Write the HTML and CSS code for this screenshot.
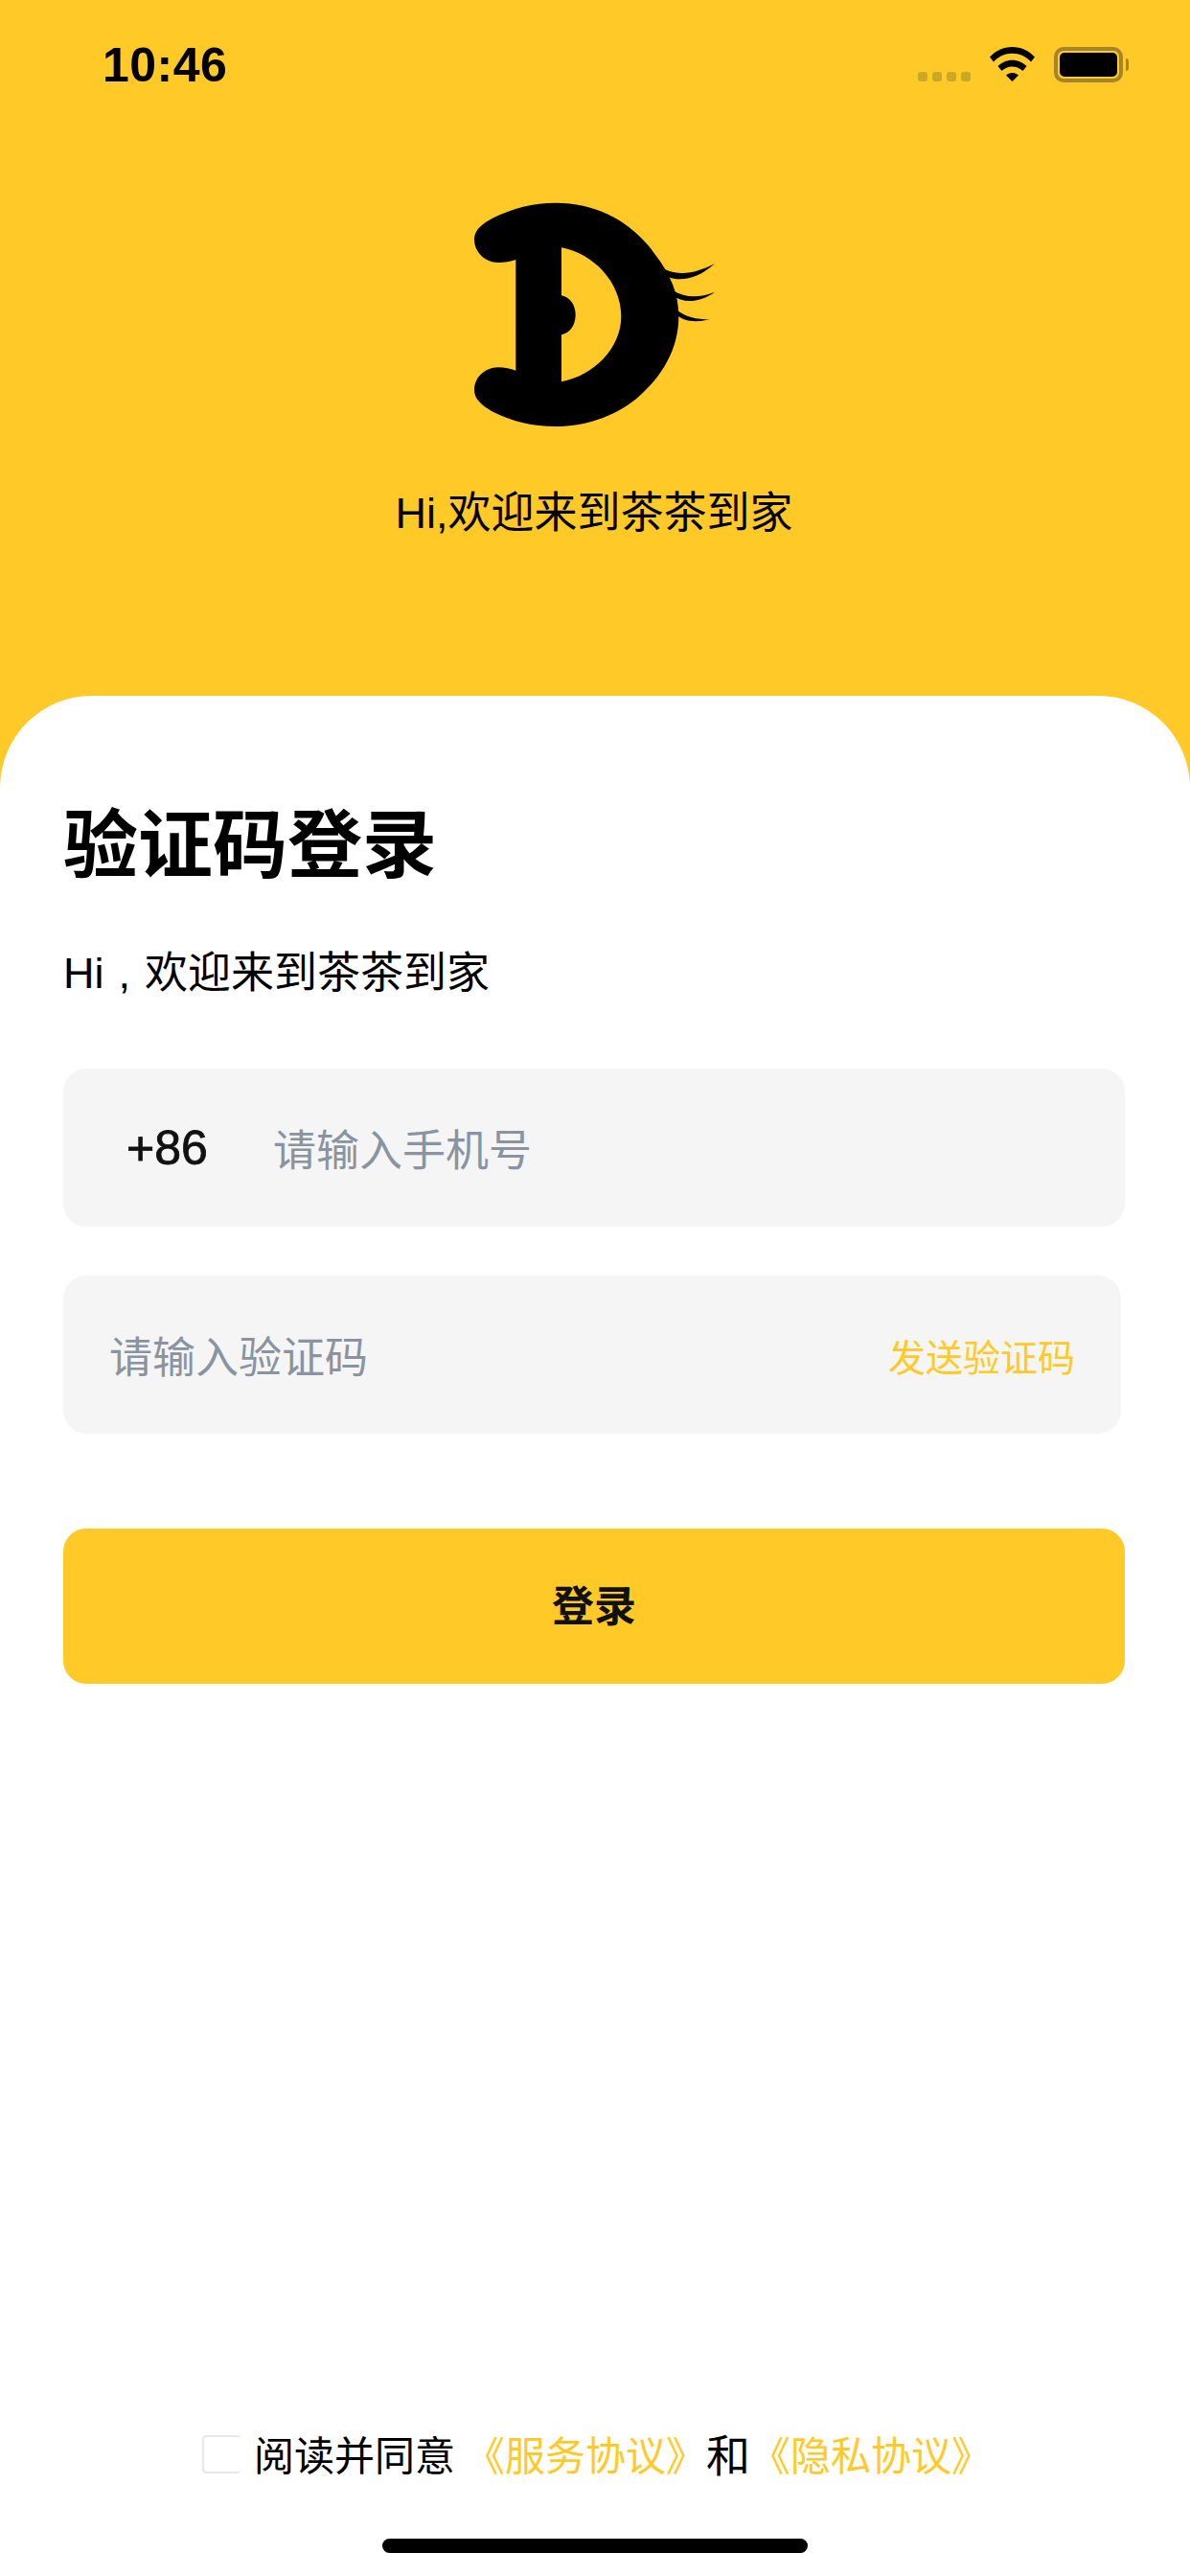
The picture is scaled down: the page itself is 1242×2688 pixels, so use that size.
FILE: index.html
```html
<!DOCTYPE html>
<html lang="zh-CN">
<head>
<meta charset="utf-8">
<title>验证码登录</title>
<link rel="stylesheet" href="styles.css">
</head>
<body>
<div class="page">
  <header class="status">
    <span class="time">10:46</span>
    <div class="status-icons">
      <div class="signal"><i></i><i></i><i></i><i></i></div>
      <svg class="wifi" viewBox="0 0 47 36"><path d="M0 10.5C6.2 4 14.4 0 23.5 0S40.800 4 47 10.500L43 15.500C37.800 10.200 31 6.800 23.500 6.800S9.200 10.200 4 15.500Z"/><path d="M8.500 20C12.300 16.200 17.600 13.700 23.500 13.700S34.700 16.200 38.500 20L34.500 25C31.700 22.200 27.800 20.400 23.500 20.400S15.300 22.200 12.500 25Z"/><path d="M17 29.500C18.700 28 21 27.100 23.500 27.100S28.300 28 30 29.500L23.500 36Z"/></svg>
      <div class="battery"><div class="battery-body"><div class="battery-fill"></div></div><div class="battery-nub"></div></div>
    </div>
  </header>
  <section class="hero">
    <svg class="logo" viewBox="0 0 930 810">
      <path fill-rule="evenodd" d="M105 180C105 150 130 130 165 112C225 82 290 65 360 65C490 65 600 125 670 225C720 290 745 350 745 420C745 520 695 610 610 680C540 735 450 765 360 765C290 765 225 750 165 720C130 700 105 680 105 650C105 610 140 580 180 580C200 580 218 584 235 590L235 243C218 249 200 252 180 252C140 252 105 220 105 180ZM378 205L378 355C405 360 422 385 422 415C422 448 405 472 378 478L378 625C480 605 565 520 565 420C565 315 480 225 378 205Z"/>
      <path d="M700 272C750 295 800 285 858 255C810 300 750 315 712 296Z"/>
      <path d="M725 338C770 365 810 362 858 344C815 375 765 382 730 358Z"/>
      <path d="M738 400C770 425 800 430 842 430C800 440 765 438 742 418Z"/>
    </svg>
    <p class="hero-text">Hi,欢迎来到茶茶到家</p>
  </section>
  <main class="card">
    <h1 class="title">验证码登录</h1>
    <p class="subtitle">Hi , 欢迎来到茶茶到家</p>
    <div class="field field-phone">
      <span class="prefix">+86</span>
      <span class="placeholder">请输入手机号</span>
    </div>
    <div class="field field-code">
      <span class="placeholder">请输入验证码</span>
      <span class="send">发送验证码</span>
    </div>
    <div class="login">登录</div>
    <div class="agree">
      <span class="check"></span>
      <span class="agree-text">阅读并同意</span>
      <span class="link">《服务协议》</span>
      <span class="and">和</span>
      <span class="link link-last">《隐私协议》</span>
    </div>
    <div class="home"></div>
  </main>
</div>
</body>
</html>
```
FILE: styles.css
```css
* { box-sizing: border-box; margin: 0; padding: 0; }
html, body { width: 1242px; height: 2688px; overflow: hidden; }
body { font-family: "Liberation Sans", "Noto Sans CJK SC", sans-serif; color: #000; background: #fff; }
.page { width: 1242px; height: 2688px; background: #ffca28; display: flex; flex-direction: column; }

.status { height: 100px; padding: 40px 64px 0 107px; display: flex; justify-content: space-between; align-items: flex-start; }
.time { font-size: 50px; font-weight: 700; line-height: 56px; letter-spacing: 0.500px; }
.status-icons { display: flex; align-items: flex-start; margin-top: 9px; }
.signal { display: flex; gap: 5px; margin-top: 26px; margin-right: 20px; }
.signal i { width: 10px; height: 10px; border-radius: 3px; background: #cba826; }
.wifi { width: 47px; height: 36px; margin-right: 20px; }
.battery { display: flex; align-items: center; }
.battery-body { width: 72px; height: 37px; border: 4px solid #a5842a; border-radius: 10px; padding: 2px; }
.battery-fill { width: 100%; height: 100%; background: #000; border-radius: 5px; }
.battery-nub { width: 3px; height: 13px; margin-left: 3px; background: #a5842a; border-radius: 0 3px 3px 0; }

.hero { height: 626px; display: flex; flex-direction: column; align-items: center; padding-top: 90px; }
.logo { width: 310px; height: 270px; margin-right: 12px; }
.hero-text { font-size: 45px; line-height: 60px; margin-top: 46px; margin-right: 2px; }

.card { flex: 1; background: #fff; border-radius: 96px 96px 0 0; padding: 0 66px; display: flex; flex-direction: column; }
.title { font-size: 78px; font-weight: 700; line-height: 100px; margin-top: 107px; }
.subtitle { font-size: 45px; line-height: 60px; margin-top: 53px; word-spacing: 2.500px; }

.field { height: 165px; background: #f5f5f5; border-radius: 24px; display: flex; align-items: center; }
.field-phone { margin-top: 69px; width: 1108px; padding-left: 66px; }
.field-code { margin-top: 51px; width: 1104px; padding: 0 48px; justify-content: space-between; }
.prefix { font-size: 50px; width: 153px; -webkit-text-stroke: 0.800px #111; color: #111; }
.placeholder { font-size: 45px; color: #8a94a0; }
.send { font-size: 39px; color: #ffca28; }

.login { margin-top: 99px; width: 1108px; height: 162px; padding-bottom: 6px; background: #ffca28; border-radius: 24px; display: flex; align-items: center; justify-content: center; font-size: 44px; font-weight: 700; color: #111; }

.agree { margin-top: auto; display: flex; align-items: center; margin-left: 145px; height: 60px; }
.check { width: 40px; height: 40px; border: 2px solid #e8e8e8; border-right: 0; border-radius: 4px; background: #fff; }
.agree-text { font-size: 42px; margin-left: 14px; margin-top: -4px; }
.link { font-size: 42px; color: #ffca28; margin-left: 10px; margin-top: -4px; }
.link-last { margin-left: 0; }
.and { font-size: 46px; margin-top: -4px; }
.home { width: 444px; height: 15px; margin: 58px 0 24px 333px; background: #000; border-radius: 8px; }
```
